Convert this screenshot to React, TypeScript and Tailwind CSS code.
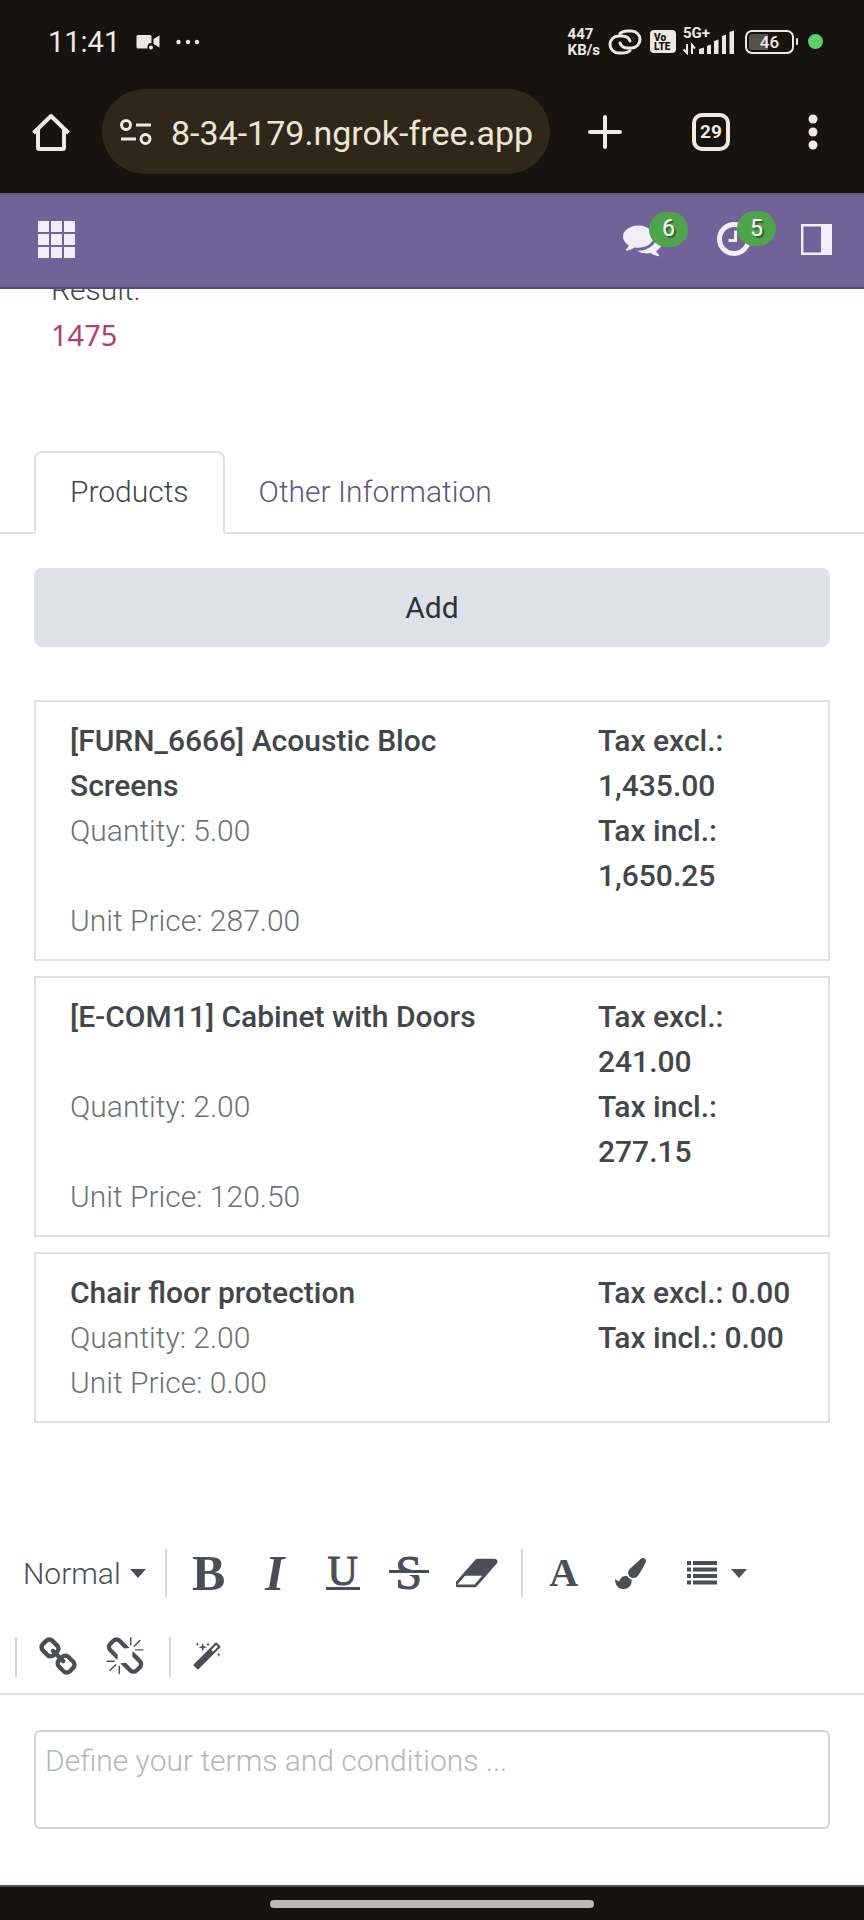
import React, { useState } from "react";

type Product = {
  name: string;
  quantity: string;
  unitPrice: string;
  taxExcl: string;
  taxIncl: string;
};

const products: Product[] = [
  { name: "[FURN_6666] Acoustic Bloc Screens", quantity: "5.00", unitPrice: "287.00", taxExcl: "1,435.00", taxIncl: "1,650.25" },
  { name: "[E-COM11] Cabinet with Doors", quantity: "2.00", unitPrice: "120.50", taxExcl: "241.00", taxIncl: "277.15" },
  { name: "Chair floor protection", quantity: "2.00", unitPrice: "0.00", taxExcl: "0.00", taxIncl: "0.00" },
];

const paths = {
  comments:
    "M1408 768q0 139-94 257t-256.5 186.5-353.5 68.5q-86 0-176-16-124 88-278 128-36 9-86 16h-3q-11 0-20.5-8t-11.5-21q-1-3-1-6.5t.5-6.5 2-6l2.5-5 3.500-5.500 4-5 4.500-5 4-4.500q5-6 23-25t26-29.500 22.500-29 25-38.500 20.500-44q-124-72-195-177t-71-224q0-139 94-257t256.500-186.500 353.500-68.500 353.500 68.500 256.500 186.500 94 257zm384 256q0 120-71 224.500t-195 176.500q10 24 20.500 44t25 38.500 22.500 29 26 29.500 23 25q1 1 4 4.500t4.500 5 4 5 3.500 5.500l2.500 5 2 6 .5 6.500-1 6.500q-3 14-13 22t-22 7q-50-7-86-16-154-40-278-128-90 16-176 16-271 0-472-132 58 4 88 4 161 0 309-45t264-129q125-92 192-212t67-254q0-77-23-152 129 71 204 178t75 230z",
  brush:
    "M1615 0q70 0 122.5 46.5t52.5 116.5q0 63-45 151-332 629-465 752-97 91-218 91-126 0-216.5-92.5t-90.5-219.5q0-128 92-212l638-579q59-54 130-54zm-909 1034q39 76 106.5 130t150.5 76l1 71q4 213-129.5 347t-348.5 134q-123 0-218-46.5t-152.5-127.5-86.5-183-29-220q7 5 41 30t62 44.5 59 36.5 46 17q41 0 55-37 25-66 57.5-112.5t69.5-76 88-47.5 103-25.5 125-10.5z",
  eraser:
    "M832 1408l336-384h-768l-336 384h768zm1013-1077q15 34 9.5 71.5t-30.5 65.5l-896 1024q-38 44-96 44h-768q-38 0-69.5-20.5t-47.5-54.5q-15-34-9.5-71.5t30.5-65.5l896-1024q38-44 96-44h768q38 0 69.5 20.5t47.5 54.5z",
  link: "M1456 1216q0-40-28-68l-208-208q-28-28-68-28-42 0-72 32 3 3 19 18.5t21.5 21.5 15 19 13 25.5 3.5 27.5q0 40-28 68t-68 28q-15 0-27.5-3.5t-25.5-13-19-15-21.5-21.5-18.5-19q-33 31-33 73 0 40 28 68l206 207q27 27 68 27 40 0 68-26l147-146q28-28 28-67zm-703-705q0-40-28-68l-206-207q-28-28-68-28-39 0-68 27l-147 146q-28 28-28 67 0 40 28 68l208 208q27 27 68 27 42 0 72-31-3-3-19-18.5t-21.5-21.5-15-19-13-25.5-3.5-27.5q0-40 28-68t68-28q15 0 27.5 3.5t25.5 13 19 15 21.5 21.5 18.5 19q33-31 33-73zm895 705q0 120-85 203l-147 146q-83 83-203 83-121 0-204-85l-206-207q-83-83-83-203 0-123 88-209l-88-88q-86 88-208 88-120 0-204-84l-208-208q-84-84-84-204t85-203l147-146q83-83 203-83 121 0 204 85l206 207q83 83 83 203 0 123-88 209l88 88q86-88 208-88 120 0 204 84l208 208q84 84 84 204z",
  unlink:
    "M503 1271l-256 256q-10 9-23 9-12 0-23-9-9-10-9-23t9-23l256-256q10-9 23-9t23 9q9 10 9 23t-9 23zm169 41v320q0 14-9 23t-23 9-23-9-9-23v-320q0-14 9-23t23-9 23 9 9 23zm-224-224q0 14-9 23t-23 9h-320q-14 0-23-9t-9-23 9-23 23-9h320q14 0 23 9t9 23zm1264 128q0 120-85 203l-147 146q-83 83-203 83-121 0-204-85l-334-335q-21-21-42-56l239-18 273 274q28 28 68 28t68-27l147-146q28-28 28-67 0-40-28-68l-274-275 18-239q35 21 56 42l336 336q84 86 84 204zm-617-724l-239 18-273-274q-28-28-68-28-39 0-68 27l-147 146q-28 28-28 67 0 40 28 68l274 274-18 240q-35-21-56-42l-336-336q-84-86-84-204 0-120 85-203l147-146q83-83 203-83 121 0 204 85l334 335q21 21 42 56zm633 84q0 14-9 23t-23 9h-320q-14 0-23-9t-9-23 9-23 23-9h320q14 0 23 9t9 23zm-544-544v320q0 14-9 23t-23 9-23-9-9-23v-320q0-14 9-23t23-9 23 9 9 23zm407 151l-256 256q-11 9-23 9t-23-9q-9-10-9-23t9-23l256-256q10-9 23-9t23 9q9 10 9 23t-9 23z",
  magic:
    "M1254 581l293-293-107-107-293 293zm447-293q0 27-18 45l-1286 1286q-18 18-45 18t-45-18l-198-198q-18-18-18-45t18-45l1286-1286q18-18 45-18t45 18l198 198q18 18 18 45zm-1351-190l98 30-98 30-30 98-30-98-98-30 98-30 30-98zm350 162l196 60-196 60-60 196-60-196-196-60 196-60 60-196zm930 478l98 30-98 30-30 98-30-98-98-30 98-30 30-98zm-640-640l98 30-98 30-30 98-30-98-98-30 98-30 30-98z",
};

function Glyph({ d, className, box = "0 0 1792 1792" }: { d: string; className: string; box?: string }) {
  return (
    <svg viewBox={box} className={className} fill="currentColor" aria-hidden="true">
      <path d={d} />
    </svg>
  );
}

function Caret() {
  return (
    <svg viewBox="0 0 16 9" className="h-[9px] w-4" fill="currentColor" aria-hidden="true">
      <path d="M0 0h16L8 9z" />
    </svg>
  );
}

function Tool({ label, className, children }: { label: string; className: string; children: React.ReactNode }) {
  return (
    <button type="button" aria-label={label} className={`flex h-12 shrink-0 items-center justify-center ${className}`}>
      {children}
    </button>
  );
}

function StatusBar() {
  return (
    <div className="flex h-[83px] items-center justify-between pr-[41px] pl-12 text-[#ece9e4]">
      <div className="flex items-center">
        <span className="text-[29px] leading-8">11:41</span>
        <svg viewBox="0 0 24 16" className="ml-4 h-4 w-6" fill="currentColor" aria-hidden="true">
          <path d="M2 1h12a1.500 1.500 0 0 1 1.500 1.500V9a4 4 0 0 0-4 4v1.500H2A1.500 1.500 0 0 1 .5 13V2.500A1.500 1.500 0 0 1 2 1zM23.500 1.500v12L17.500 10V5z" />
          <circle cx="15" cy="13.500" r="2" />
        </svg>
        <svg viewBox="0 0 24 6" className="ml-4 h-[6px] w-6" fill="currentColor" aria-hidden="true">
          <circle cx="2.500" cy="3" r="2.200" />
          <circle cx="12" cy="3" r="2.200" />
          <circle cx="21" cy="3" r="2.200" />
        </svg>
      </div>
      <div className="flex items-center">
        <div className="text-[15px] leading-4 font-bold">
          <div>447</div>
          <div>KB/s</div>
        </div>
        <svg viewBox="0 0 34 26" className="ml-2 h-[26px] w-[34px]" fill="none" stroke="currentColor" strokeWidth="3" strokeLinecap="round" aria-hidden="true">
          <path d="M12 4.500C14 2.500 17 2 20 2h3.500a8.500 8.500 0 0 1 0 17H20c-4 0-7-2-8-5" />
          <path d="M22 21.500C20 23.500 17 24 14 24h-3.500a8.500 8.500 0 0 1 0-17H14c4 0 7 2 8 5" />
        </svg>
        <div className="ml-2 flex h-[23px] w-[26px] flex-col items-start justify-center rounded bg-[#ece9e4] pl-1 text-[10px] leading-[9px] font-black text-[#17130e]">
          <span>Vo</span>
          <span>LTE</span>
        </div>
        <div className="relative ml-[7px]">
          <svg viewBox="0 0 52 26" className="h-[26px] w-[52px]" fill="currentColor" aria-hidden="true">
            <path d="M16 20l5-1.500V25h-5zM24 17l4-1.500V25h-4zM31 12l4.500-1.500V25H31zM39 7l4-1.500V25h-4zM46.500 3L51 1.500V25h-4.500z" />
            <path d="M4 15v9L.5 20.500M9 25v-9l3 3.500" fill="none" stroke="currentColor" strokeWidth="2" />
          </svg>
          <span className="absolute -top-1 left-0 text-[15px] leading-4 font-bold">5G+</span>
        </div>
        <div className="ml-[10px] flex h-6 w-[49px] rounded-[7px] border-2 border-current p-[2px]">
          <div className="flex w-full items-center justify-center rounded-[3px] bg-linear-to-r from-[#55514c] from-46% to-transparent to-46% text-[17px] leading-5 font-medium">46</div>
        </div>
        <div className="ml-[2px] h-[7px] w-[2px] rounded bg-current" />
        <div className="ml-[10px] size-[15px] rounded-full bg-[#5ed06b]" />
      </div>
    </div>
  );
}

function BrowserBar() {
  return (
    <div className="flex h-[110px] items-start pt-[6px] pr-[46px] pl-8 text-[#f1e9e2]">
      <button type="button" aria-label="Home" className="flex h-[85px] items-center">
        <svg viewBox="0 0 38 40" className="h-10 w-[38px]" fill="none" stroke="currentColor" strokeWidth="4" strokeLinejoin="round" aria-hidden="true">
          <path d="M1.500 21L19 4l17.500 17" />
          <path d="M6 17v18.500a1.500 1.500 0 0 0 1.500 1.500h23a1.500 1.500 0 0 0 1.500-1.500V17" />
        </svg>
      </button>
      <div className="ml-8 flex h-[85px] min-w-0 flex-1 items-center rounded-full bg-[#2e271a] pr-3 pl-[18px]">
        <svg viewBox="0 0 32 28" className="h-7 w-8 shrink-0" fill="none" stroke="currentColor" strokeWidth="3" aria-hidden="true">
          <circle cx="6" cy="7" r="4.500" />
          <path d="M16 7h15M1 21h15" />
          <circle cx="25.500" cy="21" r="4.500" />
        </svg>
        <input aria-label="Address" defaultValue="8-34-179.ngrok-free.app" className="ml-[19px] w-full min-w-0 bg-transparent pt-[2px] text-[34px] leading-10 text-[#efe5d4] outline-none" />
      </div>
      <div className="ml-[38px] flex h-[85px] items-center">
        <button type="button" aria-label="New tab">
          <svg viewBox="0 0 34 34" className="size-[34px]" stroke="currentColor" strokeWidth="4" strokeLinecap="round" aria-hidden="true">
            <path d="M17 2v30M2 17h30" />
          </svg>
        </button>
        <button type="button" aria-label="Open tabs" className="ml-[70px] flex size-[38px] items-center justify-center rounded-[10px] border-4 border-current text-[19px] leading-5 font-bold">
          29
        </button>
        <button type="button" aria-label="Menu" className="ml-[78px]">
          <svg viewBox="0 0 10 36" className="h-9 w-[10px]" fill="currentColor" aria-hidden="true">
            <circle cx="5" cy="5" r="4.500" />
            <circle cx="5" cy="18" r="4.500" />
            <circle cx="5" cy="31" r="4.500" />
          </svg>
        </button>
      </div>
    </div>
  );
}

function AppNav() {
  return (
    <header className="relative z-10 flex h-24 items-center justify-between border-t-2 border-b-2 border-t-[#6d5a6f] border-b-[#5b4a80] bg-[#71639a] pr-8 pb-1 pl-[38px] text-[#f1eef7]">
      <button type="button" aria-label="Apps">
        <svg viewBox="0 0 37 37" className="size-[37px]" fill="currentColor" aria-hidden="true">
          <path d="M0 0h11v11H0zM13 0h11v11H13zM26 0h11v11H26zM0 13h11v11H0zM13 13h11v11H13zM26 13h11v11H26zM0 26h11v11H0zM13 26h11v11H13zM26 26h11v11H26z" />
        </svg>
      </button>
      <div className="flex items-center">
        <button type="button" aria-label="6 messages" className="relative">
          <Glyph d={paths.comments} className="size-[39px]" />
          <span className="absolute -top-2 left-[26px] flex h-[35px] w-[39px] items-center justify-center rounded-full bg-[#4fa44b] text-[23px] leading-6 text-white [text-shadow:2px_2px_1px_#00000066]">6</span>
        </button>
        <button type="button" aria-label="5 activities" className="relative ml-[55px]">
          <svg viewBox="0 0 34 34" className="size-[34px]" fill="none" stroke="currentColor" aria-hidden="true">
            <circle cx="17" cy="17" r="14.500" strokeWidth="5" />
            <path d="M18.500 8.500v10h-7" strokeWidth="3" />
          </svg>
          <span className="absolute -top-[11px] left-5 flex h-[35px] w-[39px] items-center justify-center rounded-full bg-[#4fa44b] text-[23px] leading-6 text-white [text-shadow:2px_2px_1px_#00000066]">5</span>
        </button>
        <button type="button" aria-label="Toggle side panel" className="ml-[50px]">
          <svg viewBox="0 0 31 31" className="size-[31px]" aria-hidden="true">
            <path d="M1.200 1.200h28.600v28.600H1.200z" fill="none" stroke="currentColor" strokeWidth="2.400" />
            <path d="M20 0h11v31H20z" fill="currentColor" />
          </svg>
        </button>
      </div>
    </header>
  );
}

function ProductCard({ item }: { item: Product }) {
  return (
    <article className="grid grid-cols-[2fr_1fr] border-2 border-[#dee2e2] py-4 font-medium">
      <div className="pr-8 pl-[34px]">{item.name}</div>
      <div className="pr-8 pl-[34px]">Tax excl.: {item.taxExcl}</div>
      <div className="pr-8 pl-[34px] font-light text-[#6c7275]">Quantity: {item.quantity}</div>
      <div className="pr-8 pl-[34px]">Tax incl.: {item.taxIncl}</div>
      <div className="pr-8 pl-[34px] font-light text-[#6c7275]">Unit Price: {item.unitPrice}</div>
    </article>
  );
}

function EditorToolbar() {
  return (
    <div role="toolbar" aria-label="Text formatting" className="border-b-2 border-[#dedede] pb-3 text-[#4b4e55]">
      <div className="flex h-12 items-center pl-[23px] font-['Liberation_Serif',serif] font-bold">
        <button type="button" className="flex items-center gap-[9px] font-[Roboto,sans-serif] font-light">
          Normal <Caret />
        </button>
        <div className="ml-[19px] h-12 w-[2px] bg-[#d6d6d6]" />
        <Tool label="Bold" className="ml-6 w-9 text-[50px] leading-[50px]">B</Tool>
        <Tool label="Italic" className="ml-7 w-10 text-[50px] leading-[50px] italic">I</Tool>
        <Tool label="Underline" className="ml-[30px] w-9 text-[42px]">
          <span className="flex h-[34px] w-[34px] items-center justify-center border-b-3 border-current font-normal [-webkit-text-stroke:1px_currentColor]">U</span>
        </Tool>
        <Tool label="Strikethrough" className="relative ml-7 w-10 text-[48px] leading-[50px] font-normal [-webkit-text-stroke:1px_currentColor]">
          S
          <span className="absolute top-[21px] left-0 h-[5px] w-full border-b-2 border-white bg-current" />
        </Tool>
        <Tool label="Remove format" className="ml-[27px] w-11">
          <Glyph d={paths.eraser} box="0 0 1920 1792" className="h-10 w-[43px]" />
        </Tool>
        <div className="ml-[21px] h-12 w-[2px] bg-[#d6d6d6]" />
        <Tool label="Font color" className="ml-[25px] w-8 text-[40px] leading-[50px]">A</Tool>
        <Tool label="Background color" className="ml-[33px] w-9">
          <Glyph d={paths.brush} className="size-[31px]" />
        </Tool>
        <Tool label="List style" className="ml-[38px] gap-[14px]">
          <svg viewBox="0 0 30 24" className="h-6 w-[30px]" fill="currentColor" aria-hidden="true">
            <path d="M0 0h4v4H0zM6 0h24v4H6zM0 6.500h4v4H0zM6 6.500h24v4H6zM0 13h4v4H0zM6 13h24v4H6zM0 19.500h4v4H0zM6 19.500h24v4H6z" />
          </svg>
          <Caret />
        </Tool>
      </div>
      <div className="mt-9 flex h-12 items-center pl-[15px]">
        <div className="h-10 w-[2px] bg-[#d6d6d6]" />
        <Tool label="Insert link" className="ml-[22px] w-[41px]">
          <Glyph d={paths.link} className="size-[41px]" />
        </Tool>
        <Tool label="Remove link" className="ml-6 w-[41px]">
          <Glyph d={paths.unlink} className="size-10" />
        </Tool>
        <div className="ml-6 h-10 w-[2px] bg-[#d6d6d6]" />
        <Tool label="Generate text" className="ml-5 w-[31px]">
          <Glyph d={paths.magic} className="size-[30px]" />
        </Tool>
      </div>
    </div>
  );
}

export default function App() {
  const [tab, setTab] = useState("Products");
  return (
    <div className="flex min-h-screen flex-col overflow-hidden bg-white font-[Roboto,'Liberation_Sans',sans-serif] text-[30px] leading-[45px] text-[#43474a]">
      <div className="bg-[#17130e]">
        <StatusBar />
        <BrowserBar />
      </div>
      <AppNav />

      <main className="flex-1 font-light">
        <div className="-mt-[22px] pl-[51px]">
          <div>Result:</div>
          <div className="font-['Noto_Sans',sans-serif] text-[29px] font-normal text-[#b0416b]">1475</div>
        </div>

        <div role="tablist" className="mt-[94px] flex border-b-2 border-[#dee0e2] px-[34px]">
          {["Products", "Other Information"].map((name) => (
            <button
              key={name}
              type="button"
              role="tab"
              aria-selected={tab === name}
              onClick={() => setTab(name)}
              className={
                tab === name
                  ? "-mb-[2px] rounded-t-lg border-2 border-[#dee0e2] border-b-white px-[34px] pt-4 pb-[18px]"
                  : "-mb-[2px] rounded-t-lg border-2 border-transparent px-8 pt-4 pb-[18px] text-[#5f5480]"
              }
            >
              {name}
            </button>
          ))}
        </div>

        <div className="px-[34px] pt-[34px]">
          <button type="button" className="w-full rounded-lg bg-[#dee1e8] py-[17px] font-normal text-[#2f3338]">
            Add
          </button>
          <div className="mt-[53px] flex flex-col gap-[15px]">
            {products.map((item) => (
              <ProductCard key={item.name} item={item} />
            ))}
          </div>
        </div>

        <div className="mt-[126px]">
          <EditorToolbar />
        </div>

        <div className="px-[34px] pt-[35px] pb-14">
          <textarea
            aria-label="Terms and conditions"
            placeholder="Define your terms and conditions ..."
            className="block h-[99px] w-full resize-none rounded-md border-2 border-[#d0d2d3] px-[9px] py-[6px] outline-none placeholder:text-[#b3b7b7]"
          />
        </div>
      </main>

      <footer className="flex h-[35px] items-center justify-center border-t-2 border-[#55524c] bg-[#17130e]">
        <div className="h-2 w-3/8 rounded-full bg-[#bdb9b5]" />
      </footer>
    </div>
  );
}
